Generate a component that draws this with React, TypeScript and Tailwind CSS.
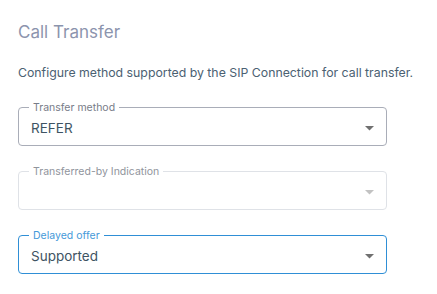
import React from "react";

function Arrow({ color }: { color: string }) {
  return (
    <svg width="9" height="5" viewBox="0 0 9 5" className="shrink-0">
      <path d="M0 0 L9 0 L4.5 4.5 Z" fill={color} />
    </svg>
  );
}

function Field({
  label,
  value,
  variant,
}: {
  label: string;
  value?: string;
  variant: "normal" | "disabled" | "focused";
}) {
  const border =
    variant === "normal"
      ? "border-[#a9adb8]"
      : variant === "disabled"
      ? "border-[#dfe2e7]"
      : "border-[#2f8fd6]";
  const labelColor =
    variant === "normal"
      ? "text-[#777c88]"
      : variant === "disabled"
      ? "text-[#90949c]"
      : "text-[#4599d9]";
  const arrow = variant === "disabled" ? "#c2c2c2" : "#707070";
  return (
    <div className={`relative h-[39px] w-[369px] rounded-[4px] border ${border}`}>
      <span
        className={`absolute left-[10px] top-[-7px] bg-white px-[4px] text-[10.5px] leading-[13px] ${labelColor}`}
      >
        {label}
      </span>
      <div className="flex h-full items-center justify-between pl-[12px] pr-[12px] pt-[3px]">
        <span className="text-[13.5px] text-[#3e5363]">{value ?? ""}</span>
        <Arrow color={arrow} />
      </div>
    </div>
  );
}

export default function App() {
  return (
    <div
      className="h-[294px] w-[437px] bg-white pl-[18px] pt-[22px]"
      style={{ fontFamily: "Inter, 'Noto Sans', sans-serif" }}
    >
      <h1 className="text-[17px] leading-[20px] text-[#8c94ad]">Call Transfer</h1>
      <p className="mt-[23px] text-[12.3px] leading-[16px] text-[#4b6172]">
        Configure method supported by the SIP Connection for call transfer.
      </p>
      <div className="mt-[26px] flex flex-col gap-[25px]">
        <Field label="Transfer method" value="REFER" variant="normal" />
        <Field label="Transferred-by Indication" variant="disabled" />
        <Field label="Delayed offer" value="Supported" variant="focused" />
      </div>
    </div>
  );
}
